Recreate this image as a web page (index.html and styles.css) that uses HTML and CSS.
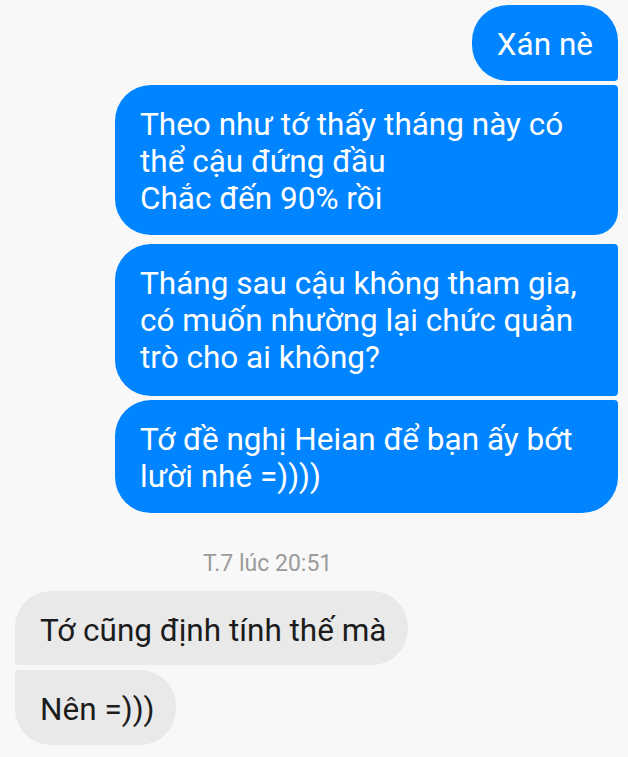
FILE: index.html
```html
<!DOCTYPE html>
<html lang="vi">
<head>
    <meta charset="UTF-8">
    <meta name="viewport" content="width=device-width, initial-scale=1.0">
    <title>Tin nhắn</title>
    <link rel="stylesheet" href="styles.css">
</head>
<body>
    <div class="chat">
        <!-- Outgoing messages -->
        <div class="group outgoing">
            <div class="bubble first">Xán nè</div>
            <div class="bubble wide last-of-pair">Theo như tớ thấy tháng này có<br>thể cậu đứng đầu<br>Chắc đến 90% rồi</div>
        </div>
        <div class="group outgoing second-group">
            <div class="bubble wide middle">Tháng sau cậu không tham gia,<br>có muốn nhường lại chức quản<br>trò cho ai không?</div>
            <div class="bubble wide last">Tớ đề nghị Heian để bạn ấy bớt<br>lười nhé =))))</div>
        </div>

        <div class="timestamp">T.7 lúc 20:51</div>

        <!-- Incoming messages -->
        <div class="group incoming">
            <div class="bubble first">Tớ cũng định tính thế mà</div>
            <div class="bubble last">Nên =)))</div>
        </div>
    </div>
</body>
</html>
```

FILE: styles.css
```css
* {
    padding: 0;
    margin: 0;
    box-sizing: border-box;
}
body {
    background-color: #f8f8f8;
    font-family: Roboto, "Noto Sans", sans-serif;
    width: 628px;
    height: 757px;
    overflow: hidden;
}

.chat {
    display: flex;
    flex-direction: column;
    padding: 5px 10px 0 15px;
}

.group {
    display: flex;
    flex-direction: column;
    gap: 4px;
}
.group.outgoing {
    align-items: flex-end;
}
.group.second-group {
    margin-top: 9px;
}
.group.incoming {
    align-items: flex-start;
    gap: 5px;
}

.bubble {
    font-size: 31.5px;
    line-height: 37px;
    padding: 21px 25px 18px;
    border-radius: 36px;
    white-space: nowrap;
}

/* Blue bubbles */
.outgoing .bubble {
    background-color: #0084ff;
    color: #ffffff;
}
.outgoing .bubble.wide {
    width: 503px;
}
.outgoing .bubble.first {
    border-bottom-right-radius: 4px;
}
.outgoing .bubble.last-of-pair {
    border-top-right-radius: 4px;
    border-bottom-right-radius: 24px;
}
.outgoing .bubble.middle {
    border-top-right-radius: 4px;
    border-bottom-right-radius: 4px;
    padding-bottom: 20px;
}
.outgoing .bubble.last {
    border-top-right-radius: 4px;
}

.timestamp {
    font-size: 23px;
    line-height: 26px;
    color: #9b9b9b;
    padding-left: 188px;
    margin: 38px 0 14px;
}

/* Gray bubbles */
.incoming .bubble {
    background-color: #e9e9e9;
    color: #1c1c1c;
    padding: 21px 21px 16px 25px;
}
.incoming .bubble.first {
    border-bottom-left-radius: 4px;
}
.incoming .bubble.last {
    border-top-left-radius: 4px;
    padding-bottom: 17px;
}
```
